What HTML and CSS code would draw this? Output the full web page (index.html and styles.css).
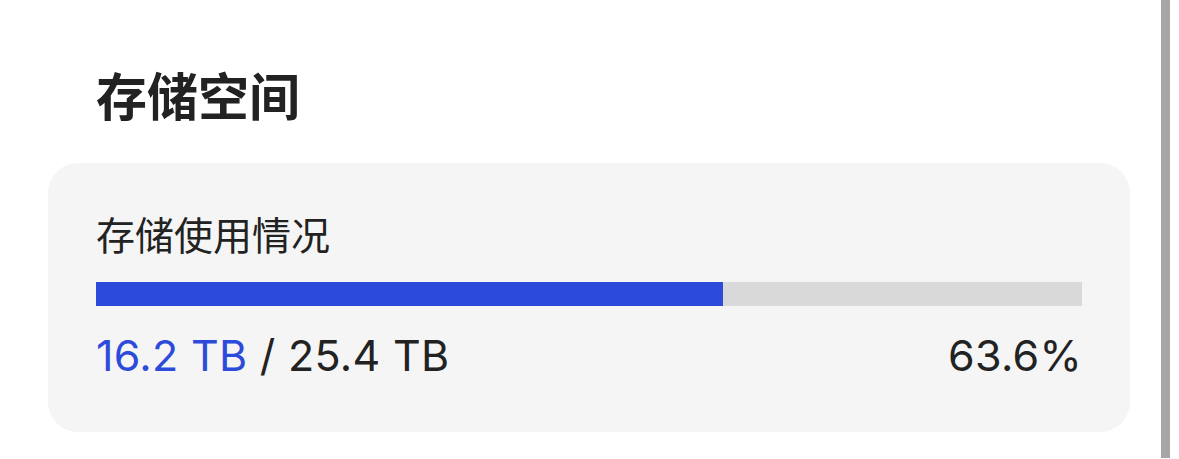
FILE: index.html
```html
<!DOCTYPE html>
<html lang="zh-CN">
<head>
<meta charset="utf-8">
<link rel="stylesheet" href="styles.css">
</head>
<body>
<div class="screen">
  <main class="page">
    <h1 class="section-title">存储空间</h1>
    <section class="card">
      <div class="card-label">存储使用情况</div>
      <div class="bar"><div class="bar-fill" style="width:63.6%"></div></div>
      <div class="stats">
        <div class="amount"><span class="used">16.2 TB</span> / 25.4 TB</div>
        <div class="percent">63.6%</div>
      </div>
    </section>
  </main>
  <div class="scrollbar"></div>
</div>
</body>
</html>
```
FILE: styles.css
```css
html, body {
  margin: 0;
  padding: 0;
  background: #ffffff;
}
body {
  font-family: Inter, "Noto Sans CJK SC", sans-serif;
  color: #222222;
}
.screen {
  display: flex;
  height: 459px;
  overflow: hidden;
}
.page {
  width: 1161px;
  box-sizing: border-box;
  padding: 63px 31px 0 48px;
}
.section-title {
  margin: 0 0 38px 48px;
  font-family: "Noto Sans CJK SC", sans-serif;
  font-size: 51px;
  line-height: 62px;
  font-weight: 700;
  color: #222222;
}
.card {
  background: #f5f5f5;
  border-radius: 30px;
  padding: 46px 48px 52px 48px;
}
.card-label {
  font-family: "Noto Sans CJK SC", sans-serif;
  font-size: 39px;
  line-height: 48px;
  font-weight: 400;
  color: #222222;
}
.bar {
  margin-top: 25px;
  height: 24px;
  background: #d9d9d9;
}
.bar-fill {
  height: 100%;
  background: #2d4bdb;
}
.stats {
  margin-top: 24px;
  display: flex;
  justify-content: space-between;
  align-items: baseline;
  font-size: 43px;
  line-height: 50px;
  letter-spacing: 0.3px;
}
.used {
  color: #2d4bdb;
}
.scrollbar {
  width: 9px;
  height: 458px;
  background: #a6a6a6;
}
```
